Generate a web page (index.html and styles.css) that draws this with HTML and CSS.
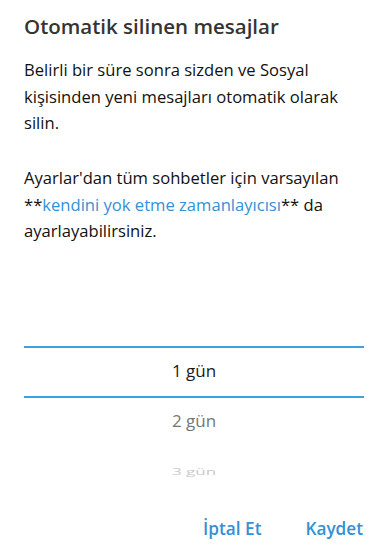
FILE: index.html
```html
<!DOCTYPE html>
<html lang="tr">
<head>
  <meta charset="UTF-8">
  <meta name="viewport" content="width=device-width, initial-scale=1.0">
  <title>Otomatik silinen mesajlar</title>
  <link rel="stylesheet" href="styles.css">
</head>
<body>
  <div id="dialog">
    <h1 class="title">Otomatik silinen mesajlar</h1>
    <p class="text">Belirli bir süre sonra sizden ve Sosyal kişisinden yeni mesajları otomatik olarak silin.</p>
    <p class="text">Ayarlar'dan tüm sohbetler için varsayılan **<a class="link" href="#">kendini yok etme zamanlayıcısı</a>** da ayarlayabilirsiniz.</p>

    <div class="picker">
      <div class="row"></div>
      <div class="row selected">1 gün</div>
      <div class="row near">2 gün</div>
      <div class="row far"><span>3 gün</span></div>
    </div>

    <div class="buttons">
      <button class="btn">İptal Et</button>
      <button class="btn">Kaydet</button>
    </div>
  </div>
</body>
</html>
```

FILE: styles.css
```css
body {
  margin: 0;
  padding: 0;
  background-color: #fff;
  font-family: 'Open Sans', sans-serif;
  color: #111;
}

#dialog {
  padding: 14px 26px 0 24px;
}

.title {
  margin: 0;
  font-size: 20.5px;
  line-height: 24px;
  font-weight: 600;
  color: #363433;
}

.text {
  margin: 19px 0 0 0;
  font-size: 16.6px;
  line-height: 26.6px;
}

.text + .text {
  margin-top: 28.5px;
}

.link {
  color: #3391d6;
  text-decoration: none;
}

.picker {
  margin-top: 51px;
}

.row {
  box-sizing: border-box;
  height: 50px;
  display: flex;
  justify-content: center;
  align-items: center;
  font-size: 17px;
  color: #1a1a1a;
}

.selected {
  height: 52px;
  padding-bottom: 3px;
  border-top: 2px solid #3ba1df;
  border-bottom: 2px solid #3ba1df;
}

.near {
  height: 48px;
  padding-bottom: 3px;
  color: #767676;
}

.far span {
  display: inline-block;
  color: #c9c9c9;
  transform: scaleY(0.5);
}

.buttons {
  display: flex;
  justify-content: flex-end;
  gap: 44px;
  margin-top: 13px;
  padding-right: 1px;
}

.btn {
  font-family: 'Open Sans', sans-serif;
  font-size: 17.2px;
  font-weight: 600;
  color: #3391d6;
  background: none;
  border: none;
  padding: 8px 0;
  margin: 0;
  cursor: pointer;
}
```
